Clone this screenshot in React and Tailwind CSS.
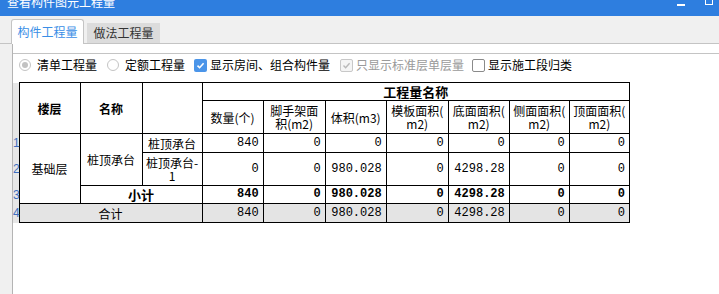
import React from "react";

const num = "font-['Liberation_Mono',monospace] text-[12px] text-right pr-[4px]";
const cjk = "font-['Noto_Sans_CJK_SC','Noto_Sans',sans-serif]";

function Radio({ checked, label }) {
  return (
    <div className="flex items-center">
      <span className="w-[12px] h-[12px] rounded-full border border-[#c4c4c4] bg-white flex items-center justify-center">
        {checked && <span className="w-[6px] h-[6px] rounded-full bg-[#c2c2c2]" />}
      </span>
      <span className="ml-[6px] text-black">{label}</span>
    </div>
  );
}

function Check({ state, label, disabled }) {
  let box;
  if (state === "blue") {
    box = (
      <span className="w-[13px] h-[13px] rounded-[2px] bg-[#4b95e9] flex items-center justify-center">
        <svg width="9" height="9" viewBox="0 0 9 9"><path d="M1.5 4.6 L3.6 6.7 L7.6 2.2" stroke="white" strokeWidth="1.6" fill="none" /></svg>
      </span>
    );
  } else if (state === "disabled") {
    box = (
      <span className="w-[13px] h-[13px] rounded-[2px] border border-[#c8c8c8] bg-[#f4f4f4] flex items-center justify-center">
        <svg width="9" height="9" viewBox="0 0 9 9"><path d="M1.5 4.6 L3.6 6.7 L7.6 2.2" stroke="#b8b8b8" strokeWidth="1.4" fill="none" /></svg>
      </span>
    );
  } else {
    box = <span className="w-[13px] h-[13px] rounded-[2px] border border-[#8a8a8a] bg-white" />;
  }
  return (
    <div className="flex items-center">
      {box}
      <span className={"ml-[3px] " + (disabled ? "text-[#9a9a9a]" : "text-black")}>{label}</span>
    </div>
  );
}

export default function App() {
  const td = "border border-black p-0";
  const rn = "p-0 bg-[#e6e6e6] text-[#3f6fc0] font-['Liberation_Sans',sans-serif] text-[12px] text-left align-middle leading-none";
  return (
    <div className={"w-[719px] h-[294px] bg-[#f0f0f0] overflow-hidden flex flex-col text-[12px] " + cjk}>
      {/* title bar */}
      <div className="h-[16px] bg-[#2e7edf] flex items-start justify-between overflow-hidden shrink-0">
        <div className="text-white text-[12px] leading-[12px] pl-[7px] -mt-[4px]">查看构件图元工程量</div>
        <div className="flex items-start">
          <span className="mt-[4px] w-[8px] h-[2px] bg-white" />
          <span className="ml-[20px] mr-[6px] -mt-[2px] w-[8px] h-[7px] border border-white" />
        </div>
      </div>
      {/* tabs */}
      <div className="h-[28px] shrink-0 flex items-end pl-[11px] border-b border-[#c4c4c4]">
        <div className="-mb-px w-[73px] h-[25px] bg-white border border-b-0 border-[#c4c4c4] rounded-t-[3px] flex items-center justify-center text-[#3a8ee6] leading-none">
          构件工程量
        </div>
        <div className="ml-[3px] w-[73px] h-[20px] bg-[#dcdcdc] flex items-center justify-center text-[#333] leading-none">
          做法工程量
        </div>
      </div>
      {/* content */}
      <div className="flex-1 ml-[12px] bg-white border-l border-[#b4b4b4] flex flex-col">
        <div className="h-[9px]" />
        <div className="border-t border-[#c4c4c4] h-[23px] flex items-center pl-[6px] leading-none">
          <Radio checked label="清单工程量" />
          <div className="ml-[10px]"><Radio label="定额工程量" /></div>
          <div className="ml-[9px]"><Check state="blue" label="显示房间、组合构件量" /></div>
          <div className="ml-[10px]"><Check state="disabled" disabled label="只显示标准层单层量" /></div>
          <div className="ml-[8px]"><Check state="none" label="显示施工段归类" /></div>
        </div>
        <div className="mt-[6px]">
          <table className="border-collapse table-fixed w-[617px] text-black leading-[13px]">
            <colgroup>
              <col className="w-[6px]" />
              <col className="w-[61px]" />
              <col className="w-[62px]" />
              <col className="w-[60px]" />
              <col className="w-[61px]" />
              <col className="w-[62px]" />
              <col className="w-[61px]" />
              <col className="w-[62px]" />
              <col className="w-[61px]" />
              <col className="w-[60px]" />
              <col className="w-[60px]" />
            </colgroup>
            <tbody>
              <tr className="h-[18px]">
                <td rowSpan={2} className="p-0 bg-[#e6e6e6]" />
                <td rowSpan={2} className={td + " text-center font-bold"}>楼层</td>
                <td rowSpan={2} className={td + " text-center font-bold"}>名称</td>
                <td rowSpan={2} className={td} />
                <td colSpan={7} className={td + " text-center font-bold text-[13px]"}>工程量名称</td>
              </tr>
              <tr className="h-[33px] text-center">
                <td className={td}>数量(个)</td>
                <td className={td}>脚手架面<br />积(m2)</td>
                <td className={td}>体积(m3)</td>
                <td className={td}>模板面积(<br />m2)</td>
                <td className={td}>底面面积(<br />m2)</td>
                <td className={td}>侧面面积(<br />m2)</td>
                <td className={td}>顶面面积(<br />m2)</td>
              </tr>
              <tr className="h-[19px]">
                <td className={rn}>1</td>
                <td rowSpan={3} className={td + " text-center"}>基础层</td>
                <td rowSpan={2} className={td + " text-center"}>桩顶承台</td>
                <td className={td + " text-center"}>桩顶承台</td>
                <td className={td + " " + num}>840</td>
                <td className={td + " " + num}>0</td>
                <td className={td + " " + num}>0</td>
                <td className={td + " " + num}>0</td>
                <td className={td + " " + num}>0</td>
                <td className={td + " " + num}>0</td>
                <td className={td + " " + num}>0</td>
              </tr>
              <tr className="h-[33px]">
                <td className={rn}>2</td>
                <td className={td + " text-center"}>桩顶承台-<br />1</td>
                <td className={td + " " + num}>0</td>
                <td className={td + " " + num}>0</td>
                <td className={td + " " + num}>980.028</td>
                <td className={td + " " + num}>0</td>
                <td className={td + " " + num}>4298.28</td>
                <td className={td + " " + num}>0</td>
                <td className={td + " " + num}>0</td>
              </tr>
              <tr className="h-[18px] font-bold">
                <td className={rn + " font-normal"}>3</td>
                <td colSpan={2} className={td + " text-center text-[13px]"}>小计</td>
                <td className={td + " " + num}>840</td>
                <td className={td + " " + num}>0</td>
                <td className={td + " " + num}>980.028</td>
                <td className={td + " " + num}>0</td>
                <td className={td + " " + num}>4298.28</td>
                <td className={td + " " + num}>0</td>
                <td className={td + " " + num}>0</td>
              </tr>
              <tr className="h-[19px] bg-[#e4e4e4]">
                <td className={rn}>4</td>
                <td colSpan={3} className={td + " text-center"}>合计</td>
                <td className={td + " " + num}>840</td>
                <td className={td + " " + num}>0</td>
                <td className={td + " " + num}>980.028</td>
                <td className={td + " " + num}>0</td>
                <td className={td + " " + num}>4298.28</td>
                <td className={td + " " + num}>0</td>
                <td className={td + " " + num}>0</td>
              </tr>
            </tbody>
          </table>
        </div>
      </div>
    </div>
  );
}
